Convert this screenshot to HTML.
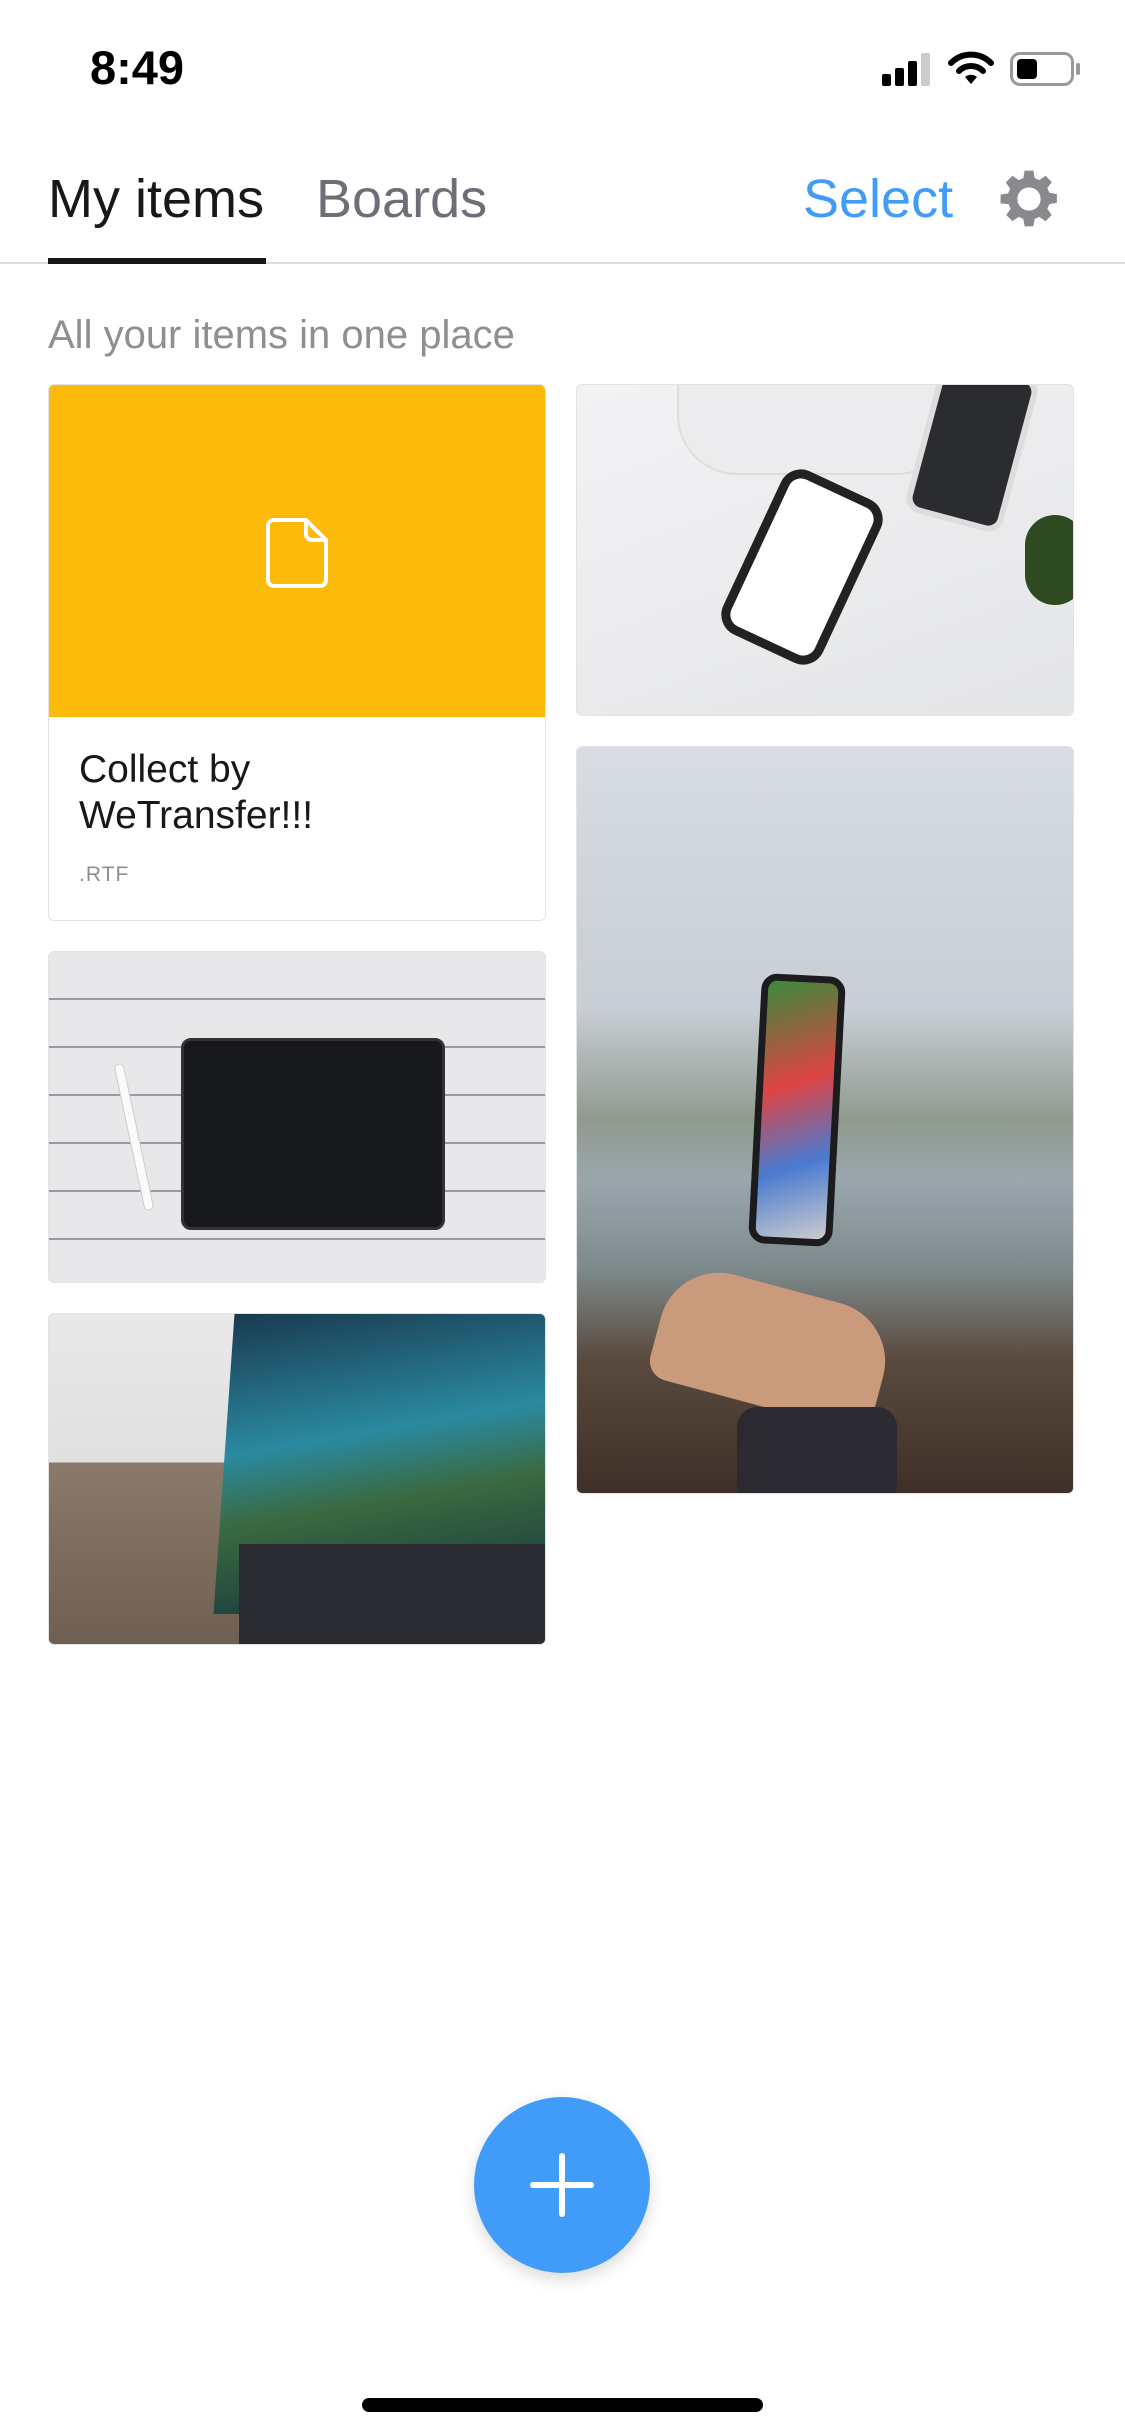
<!DOCTYPE html>
<html><head><meta charset="utf-8"><style>
*{margin:0;padding:0;box-sizing:border-box}
body{width:1125px;height:2436px;background:#fff;position:relative;overflow:hidden;font-family:"Liberation Sans",Arial,sans-serif}
.a{position:absolute}
.card{position:absolute;border-radius:6px;overflow:hidden;border:1px solid #e3e3e3}
</style></head><body>
<div class="a" style="left:90px;top:40px;font-size:47px;font-weight:700;color:#000">8:49</div>
<div class="a" style="left:882px;top:52px;width:52px;height:34px">
 <div class="a" style="left:0;top:22px;width:9px;height:12px;background:#000;border-radius:2px"></div>
 <div class="a" style="left:13px;top:16px;width:9px;height:18px;background:#000;border-radius:2px"></div>
 <div class="a" style="left:26px;top:9px;width:9px;height:25px;background:#000;border-radius:2px"></div>
 <div class="a" style="left:39px;top:1px;width:9px;height:33px;background:#ccc;border-radius:2px"></div>
</div>
<svg class="a" style="left:948px;top:50px" width="46" height="36" viewBox="0 0 46 36"><path d="M3 13 A28 28 0 0 1 43 13" stroke="#000" stroke-width="6" fill="none" stroke-linecap="round"/><path d="M11 21 A17 17 0 0 1 35 21" stroke="#000" stroke-width="6" fill="none" stroke-linecap="round"/><path d="M17 27 L23 34 L29 27 A9 9 0 0 0 17 27Z" fill="#000"/></svg>
<div class="a" style="left:1010px;top:52px;width:64px;height:34px;border:3px solid #999;border-radius:10px"><div class="a" style="left:4px;top:4px;width:20px;height:20px;background:#000;border-radius:4px"></div></div>
<div class="a" style="left:1076px;top:63px;width:4px;height:12px;background:#999;border-radius:2px"></div>

<div class="a" style="left:48px;top:168px;font-size:54px;color:#17181a">My items</div>
<div class="a" style="left:316px;top:168px;font-size:54px;color:#6e6e78">Boards</div>
<div class="a" style="left:803px;top:168px;font-size:54px;color:#409cf8">Select</div>
<svg class="a" style="left:998px;top:168px" width="62" height="62" viewBox="0 0 24 24"><path fill="#8a8a8e" d="M10.3 1h3.4l.5 2.9 1.8.8 2.4-1.7 2.4 2.4-1.7 2.4.8 1.8 2.9.5v3.4l-2.9.5-.8 1.8 1.7 2.4-2.4 2.4-2.4-1.7-1.8.8-.5 2.9h-3.4l-.5-2.9-1.8-.8-2.4 1.7-2.4-2.4 1.7-2.4-.8-1.8L1 13.7v-3.4l2.9-.5.8-1.8L3 5.6 5.6 3l2.4 1.7 1.8-.8zM12 7.5a4.5 4.5 0 1 0 0 9 4.5 4.5 0 0 0 0-9z"/></svg>
<div class="a" style="left:0;top:262px;width:1125px;height:2px;background:#ddd"></div>
<div class="a" style="left:48px;top:258px;width:218px;height:6px;background:#17181a"></div>

<div class="a" style="left:48px;top:313px;font-size:40px;color:#8e8e93">All your items in one place</div>

<div class="card" style="left:48px;top:384px;width:498px;height:537px">
 <div class="a" style="left:0;top:0;width:498px;height:332px;background:#fcba0a"></div>
 <svg class="a" style="left:217px;top:132px" width="64" height="72" viewBox="0 0 64 72"><path d="M8 3h32l20 20v40a6 6 0 0 1-6 6H8a6 6 0 0 1-6-6V9a6 6 0 0 1 6-6z M40 3v14a6 6 0 0 0 6 6h14" fill="none" stroke="#fff" stroke-width="4" stroke-linejoin="round"/></svg>
 <div class="a" style="left:30px;top:362px;font-size:39px;line-height:46px;color:#17181a">Collect by<br>WeTransfer!!!</div>
 <div class="a" style="left:30px;top:478px;font-size:21px;color:#8e8e93;letter-spacing:1px">.RTF</div>
</div>

<div class="card" style="left:576px;top:384px;width:498px;height:332px;background:linear-gradient(160deg,#f2f2f4,#e4e5e7)">
 <div class="a" style="left:100px;top:-40px;width:280px;height:130px;background:#ececee;border-radius:0 0 60px 60px;border:2px solid #ddd"></div>
 <div class="a" style="left:170px;top:92px;width:110px;height:180px;background:#fff;border:9px solid #222;border-radius:22px;transform:rotate(25deg)"></div>
 <div class="a" style="left:345px;top:-20px;width:100px;height:160px;background:#2a2c30;border:6px solid #ddd;border-radius:16px;transform:rotate(15deg)"></div>
 <div class="a" style="left:448px;top:130px;width:60px;height:90px;background:#2d4a20;border-radius:30px"></div>
</div>

<div class="card" style="left:576px;top:746px;width:498px;height:748px;background:linear-gradient(180deg,#d8dde3 0%,#c8ced5 35%,#8f9a8e 50%,#9aa6ad 58%,#7d8a8c 70%,#5a4a3e 82%,#3e3028 100%)">
 <div class="a" style="left:178px;top:228px;width:84px;height:270px;background:linear-gradient(160deg,#3a8a3a,#d44 40%,#4a7ad0 70%,#ccc);border:7px solid #1c1c1e;border-radius:16px;transform:rotate(3deg)"></div>
 <div class="a" style="left:80px;top:540px;width:230px;height:120px;background:#c99a7c;border-radius:60px 60px 20px 20px;transform:rotate(15deg)"></div>
 <div class="a" style="left:160px;top:660px;width:160px;height:100px;background:#2a2a30;border-radius:20px"></div>
</div>

<div class="card" style="left:48px;top:951px;width:498px;height:332px;background:repeating-linear-gradient(180deg,#e8e8ea 0,#e8e8ea 46px,#9a9aa2 46px,#9a9aa2 48px)">
 <div class="a" style="left:132px;top:86px;width:264px;height:192px;background:#17181b;border:3px solid #333;border-radius:10px"></div>
 <div class="a" style="left:80px;top:110px;width:10px;height:150px;background:#fafafa;border:1px solid #ccc;border-radius:5px;transform:rotate(-12deg)"></div>
</div>

<div class="card" style="left:48px;top:1313px;width:498px;height:332px;background:linear-gradient(180deg,#e9e9ea 0%,#e0e0e0 45%,#8a7a6a 45%,#6f5f52 100%)">
 <div class="a" style="left:175px;top:0;width:330px;height:300px;background:linear-gradient(170deg,#1a3a50,#2a8aa0 40%,#3a6a40 60%,#143040);transform:skewX(-4deg)"></div>
 <div class="a" style="left:190px;top:230px;width:320px;height:110px;background:#2a2b30"></div>
</div>

<div class="a" style="left:474px;top:2097px;width:176px;height:176px;border-radius:50%;background:#409cf8;box-shadow:0 6px 16px rgba(0,0,0,.15)"></div>
<div class="a" style="left:530px;top:2182px;width:64px;height:6px;background:#fff;border-radius:3px"></div>
<div class="a" style="left:559px;top:2153px;width:6px;height:64px;background:#fff;border-radius:3px"></div>

<div class="a" style="left:362px;top:2398px;width:401px;height:14px;background:#000;border-radius:7px"></div>
</body></html>
